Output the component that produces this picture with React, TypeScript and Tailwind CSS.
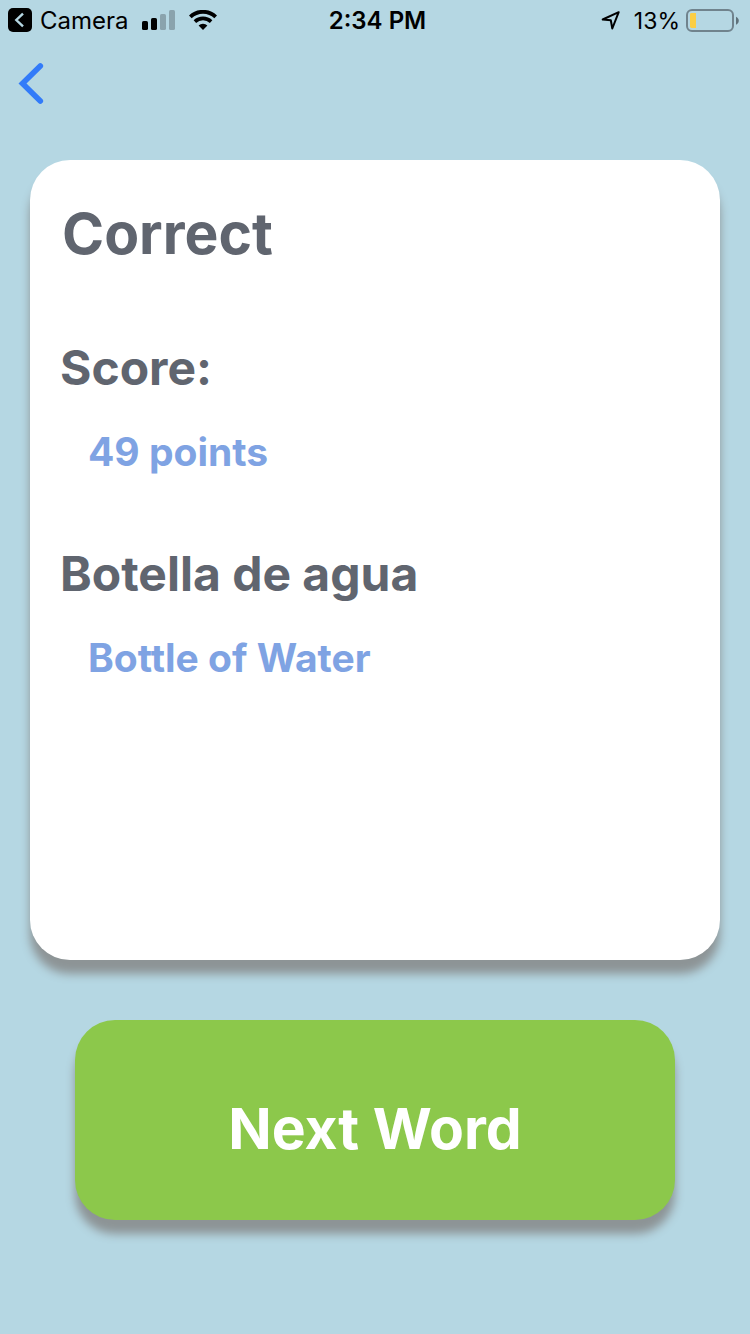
import React from "react";

function BackToCameraIcon() {
  return (
    <svg viewBox="0 0 24 24" className="size-6" aria-hidden="true">
      <rect width="24" height="24" rx="5" fill="#000" />
      <path d="M15 5.600 8.300 12l6.700 6.400" fill="none" stroke="#b5d7e3" strokeWidth="2.4" />
    </svg>
  );
}

function SignalIcon() {
  return (
    <svg viewBox="0 0 33 20" className="h-5 w-[33px]" aria-hidden="true">
      <rect x="0" y="11" width="6" height="9" rx="1.6" fill="#000" />
      <rect x="9" y="8" width="6" height="12" rx="1.6" fill="#000" />
      <rect x="18" y="4" width="6" height="16" rx="1.6" fill="#8aa3ad" />
      <rect x="27" y="0" width="6" height="20" rx="1.6" fill="#8aa3ad" />
    </svg>
  );
}

function WifiIcon() {
  return (
    <svg viewBox="0 0 28 20" className="h-5 w-7" aria-hidden="true">
      <path d="M1.300 6.900a18.400 18.400 0 0 1 25.400 0" fill="none" stroke="#000" strokeWidth="3.900" />
      <path d="M5.900 11.600a11.800 11.800 0 0 1 16.200 0" fill="none" stroke="#000" strokeWidth="3.600" />
      <path d="M14 20l-4.400-4.500a6.500 6.500 0 0 1 8.800 0z" fill="#000" />
    </svg>
  );
}

function LocationIcon() {
  return (
    <svg viewBox="0 0 19 20" className="h-5 w-[19px]" aria-hidden="true">
      <path d="M17.700 2.200 1.700 9.500l8.100.8 1.500 8.200z" fill="none" stroke="#000" strokeWidth="2" strokeLinejoin="round" />
    </svg>
  );
}

function BatteryIcon() {
  return (
    <svg viewBox="0 0 53 23" className="h-[23px] w-[53px]" aria-hidden="true">
      <rect x="1" y="1" width="46" height="21" rx="5" fill="none" stroke="#70838d" strokeWidth="2" />
      <path d="M4 5.400A1.400 1.400 0 0 1 5.400 4H10v15H5.400A1.400 1.400 0 0 1 4 17.600z" fill="#fbce45" />
      <path d="M50 7.800c3.700 1.500 3.700 6.400 0 7.900z" fill="#5f717a" />
    </svg>
  );
}

function StatusBar() {
  return (
    <div className="grid h-10 grid-cols-[1fr_auto_1fr] items-center pr-[11px] pl-2 text-2xl text-black">
      <div className="flex items-center">
        <a href="#camera" className="flex items-center gap-2">
          <BackToCameraIcon />
          <span className="pt-0.5">Camera</span>
        </a>
        <div className="flex items-center gap-[14px] pl-[13px]">
          <SignalIcon />
          <WifiIcon />
        </div>
      </div>
      <time className="pt-0.5 pl-2 font-semibold">2:34 PM</time>
      <div className="flex items-center justify-end">
        <LocationIcon />
        <span className="pt-0.5 pr-1.5 pl-[14px] text-[23px]/8">13%</span>
        <BatteryIcon />
      </div>
    </div>
  );
}

function Entry({ title, value }: { title: string; value: string }) {
  return (
    <section className="pt-[68px]">
      <h2 className="text-5xl/[60px] font-bold text-[#60656f]">{title}</h2>
      <p className="pt-[30px] pl-7 text-[39px]/[48px] font-bold text-[#7fa3e3]">{value}</p>
    </section>
  );
}

export default function App() {
  return (
    <div className="flex min-h-screen flex-col bg-[#b5d7e3] font-['Inter',sans-serif]">
      <StatusBar />
      <nav className="flex h-[120px] items-start px-4 pt-5">
        <button type="button" aria-label="Back" className="flex h-12 w-8 items-center">
          <svg viewBox="0 0 32 48" className="h-12 w-8" aria-hidden="true">
            <path d="M24.300 6 6.500 23.500 24.300 41" fill="none" stroke="#327bf9" strokeWidth="5.600" strokeLinecap="round" strokeLinejoin="miter" />
          </svg>
        </button>
      </nav>
      <main className="flex flex-col px-[30px]">
        <div className="min-h-[800px] rounded-[40px] bg-white px-[30px] pt-[38px] shadow-[0_14px_10px_#8d9496]">
          <h1 className="pl-0.5 text-[57px]/[72px] font-bold text-[#60656f]">Correct</h1>
          <Entry title="Score:" value="49 points" />
          <Entry title="Botella de agua" value="Bottle of Water" />
        </div>
        <button
          type="button"
          className="mx-[45px] mt-[60px] h-[200px] rounded-[40px] bg-[#8cc84b] pt-[18px] text-[57px]/[72px] font-bold text-white shadow-[0_14px_10px_#8d9496]"
        >
          Next Word
        </button>
      </main>
    </div>
  );
}
